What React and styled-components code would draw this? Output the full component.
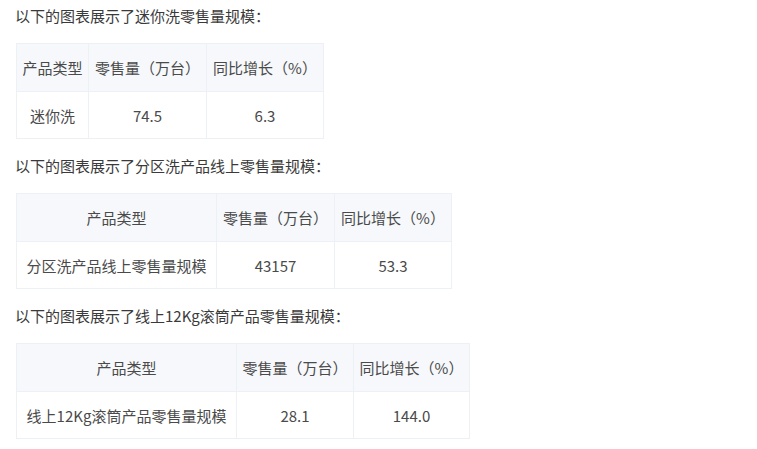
import React from "react";
import styled, { createGlobalStyle } from "styled-components";

const GlobalStyle = createGlobalStyle`
	body {
		margin: 0;
		background: #fff;
		font-family: "Noto Sans CJK SC", "Noto Sans", sans-serif;
		text-spacing-trim: space-all;
	}
`;

const Page = styled.div`
	padding: 5px 0 0 15px;
	display: flex;
	flex-direction: column;
	align-items: flex-start;
`;

const Section = styled.section`
	display: flex;
	flex-direction: column;
	align-items: flex-start;
	gap: 16px;
	margin-bottom: 16px;
`;

const Caption = styled.p`
	margin: 0;
	font-size: 15px;
	line-height: 22px;
	color: #3a3a3a;
`;

const Table = styled.table`
	margin-left: 1px;
	border-collapse: collapse;
	table-layout: fixed;
	font-size: 15px;
	color: #4a4a4a;
`;

const Head = styled.th`
	width: ${(p) => p.$w}px;
	height: 47px;
	padding: 0;
	font-weight: normal;
	text-align: center;
	background: #f6f8fb;
	border: 1px solid #edf0f4;
	white-space: nowrap;
`;

const Cell = styled.td`
	height: 46px;
	padding: 0;
	text-align: center;
	background: #fff;
	border: 1px solid #edf0f4;
	white-space: nowrap;
`;

const data = [
	{
		caption: "以下的图表展示了迷你洗零售量规模：",
		widths: [71, 117, 116],
		row: ["迷你洗", "74.5", "6.3"],
	},
	{
		caption: "以下的图表展示了分区洗产品线上零售量规模：",
		widths: [199, 117, 116],
		row: ["分区洗产品线上零售量规模", "43157", "53.3"],
	},
	{
		caption: "以下的图表展示了线上12Kg滚筒产品零售量规模：",
		widths: [219, 116, 115],
		row: ["线上12Kg滚筒产品零售量规模", "28.1", "144.0"],
	},
];

const headers = ["产品类型", "零售量（万台）", "同比增长（%）"];

const App = () => {
	return (
		<Page lang="zh-CN">
			<GlobalStyle />
			{data.map((d) => (
				<Section key={d.caption}>
					<Caption>{d.caption}</Caption>
					<Table>
						<thead>
							<tr>
								{headers.map((h, i) => (
									<Head key={h} $w={d.widths[i]}>
										{h}
									</Head>
								))}
							</tr>
						</thead>
						<tbody>
							<tr>
								{d.row.map((c, i) => (
									<Cell key={i}>{c}</Cell>
								))}
							</tr>
						</tbody>
					</Table>
				</Section>
			))}
		</Page>
	);
};

export default App;
